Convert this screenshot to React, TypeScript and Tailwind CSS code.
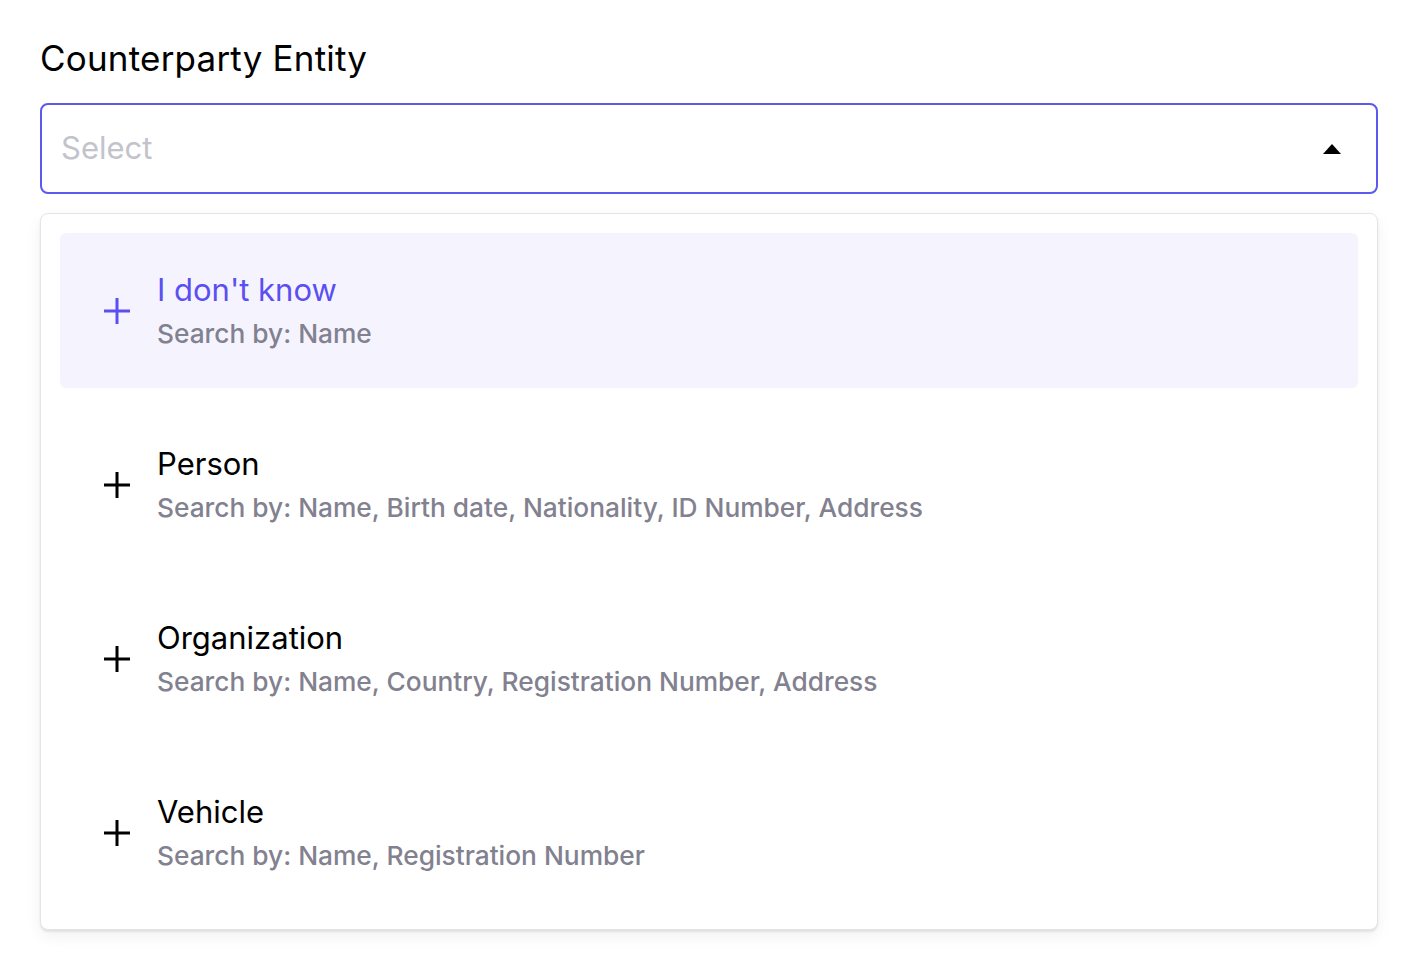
import React from 'react';

type Option = {
    id: string;
    label: string;
    searchBy: string;
};

const options: Option[] = [
    { id: 'unknown', label: "I don't know", searchBy: 'Name' },
    { id: 'person', label: 'Person', searchBy: 'Name, Birth date, Nationality, ID Number, Address' },
    { id: 'org', label: 'Organization', searchBy: 'Name, Country, Registration Number, Address' },
    { id: 'vehicle', label: 'Vehicle', searchBy: 'Name, Registration Number' },
];

const PlusIcon = ({ className }: { className?: string }) => (
    <svg className={className} viewBox="0 0 28 28" fill="none" stroke="currentColor" strokeWidth="3">
        <path d="M14 1v26M1 14h26" />
    </svg>
);

const OptionRow = ({ option, active }: { option: Option; active: boolean }) => (
    <div className={`flex items-center h-[155px] rounded-md pl-[43px] ${active ? 'bg-[#f5f4fe]' : ''}`}>
        <PlusIcon className={`w-[28px] h-[28px] shrink-0 ${active ? 'text-[#5b4ff2]' : 'text-black'}`} />
        <div className="ml-[26px] flex flex-col">
            <span className={`text-[31px] leading-[42px] ${active ? 'text-[#5b4ff2]' : 'text-black'}`}>{option.label}</span>
            <span className="mt-[4px] text-[26.3px] leading-[38px] font-medium text-[#82818f]">Search by: {option.searchBy}</span>
        </div>
    </div>
);

export default function App() {
    return (
        <div className="min-h-screen bg-white pl-[40px] pr-[36px] pt-[34px] font-['Inter',sans-serif]">
            <label className="block text-[35px] leading-[48px] tracking-[0.2px] text-black">Counterparty Entity</label>
            <button className="mt-[21px] w-full h-[91px] flex items-center justify-between rounded-[8px] border-2 border-[#5b59ef] pl-[19px] pr-[35px] text-left">
                <span className="text-[31px] text-[#c3c3cc]">Select</span>
                <svg className="w-[18px] h-[10px]" viewBox="0 0 18 10">
                    <path d="M9 0L18 10H0z" fill="black" />
                </svg>
            </button>
            <div className="mt-[19px] rounded-[8px] border border-[#e4e4e4] bg-white p-[19px] shadow-[0_2px_2px_rgba(0,0,0,0.08),0_6px_16px_rgba(0,0,0,0.06)] flex flex-col gap-[19px]">
                {options.map((o, i) => (
                    <OptionRow key={o.id} option={o} active={i === 0} />
                ))}
            </div>
        </div>
    );
}
